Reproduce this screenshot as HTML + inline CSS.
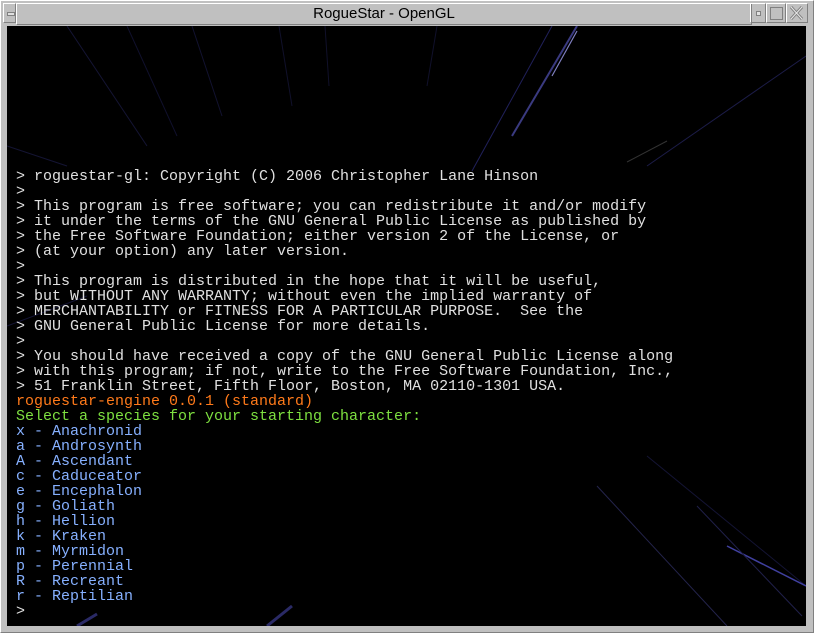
<!DOCTYPE html>
<html><head><style>
html,body{margin:0;padding:0;}
body{width:814px;height:633px;background:#c0c0c0;position:relative;overflow:hidden;font-family:"Liberation Sans",sans-serif;}
.frame{position:absolute;left:0;top:0;width:812px;height:631px;border-top:1px solid #fff;border-left:1px solid #fff;border-right:1px solid #808080;border-bottom:1px solid #808080;}
.title{position:absolute;left:16px;top:3px;width:734px;height:20px;border:1px solid;border-color:#fff #808080 #808080 #fff;text-align:center;font-size:15px;line-height:20px;color:#000;}
.btn{position:absolute;top:3px;height:20px;border:1px solid;border-color:#fff #808080 #808080 #fff;box-sizing:border-box;}
.screen{position:absolute;left:7px;top:26px;width:799px;height:600px;background:#000;overflow:hidden;}
pre{position:absolute;left:9px;top:143px;margin:0;font-family:"Liberation Mono",monospace;font-size:15px;line-height:15px;color:#e0e0e0;letter-spacing:0;}
.o{color:#ff7a1a}.g{color:#7ee040}.b{color:#86b0ff}
</style></head><body>
<div class="frame"></div>
<div class="btn" style="left:3px;width:13px;"><div style="position:absolute;left:3px;top:8px;width:6px;height:2px;border:1px solid #808080;background:#e0e0e0"></div></div>
<div class="title">RogueStar - OpenGL</div>
<div class="btn" style="left:750px;width:16px;"><div style="position:absolute;left:5px;top:7px;width:3px;height:3px;border:1px solid #808080;background:#e0e0e0"></div></div>
<div class="btn" style="left:766px;width:20px;"><div style="position:absolute;left:3px;top:3px;width:11px;height:11px;border:1px solid #808080;"></div></div>
<div class="btn" style="left:786px;width:22px;"><svg width="20" height="18" style="position:absolute;left:0;top:0"><path d="M4 3 L15 15 M15 3 L4 15" stroke="#808080" stroke-width="3"/><path d="M4 3 L15 15 M15 3 L4 15" stroke="#e8e8e8" stroke-width="1"/></svg></div>
<div class="screen">
<svg width="799" height="600" style="position:absolute;left:0;top:0">
<g stroke-width="1" fill="none">
<line x1="60" y1="0" x2="140" y2="120" stroke="#141434"/>
<line x1="120" y1="0" x2="170" y2="110" stroke="#10102c"/>
<line x1="185" y1="0" x2="215" y2="90" stroke="#121230"/>
<line x1="272" y1="0" x2="285" y2="80" stroke="#10102a"/>
<line x1="318" y1="0" x2="322" y2="60" stroke="#10102a"/>
<line x1="430" y1="0" x2="420" y2="60" stroke="#10102a"/>
<line x1="545" y1="0" x2="465" y2="145" stroke="#20205a"/>
<line x1="570" y1="0" x2="505" y2="110" stroke="#3a3a80" stroke-width="2"/>
<line x1="545" y1="50" x2="570" y2="5" stroke="#8080c0" stroke-width="1.2"/>
<line x1="799" y1="30" x2="640" y2="140" stroke="#1c1c48"/>
<line x1="620" y1="136" x2="660" y2="115" stroke="#333"/>
<line x1="0" y1="300" x2="80" y2="270" stroke="#141434"/>
<line x1="0" y1="120" x2="60" y2="140" stroke="#141434"/>
<line x1="590" y1="460" x2="720" y2="600" stroke="#24244c"/>
<line x1="640" y1="430" x2="799" y2="560" stroke="#141434"/>
<line x1="720" y1="520" x2="799" y2="560" stroke="#4040a0" stroke-width="1.5"/>
<line x1="690" y1="480" x2="795" y2="590" stroke="#20204a"/>
<line x1="70" y1="600" x2="90" y2="588" stroke="#2a2a66" stroke-width="3"/>
<line x1="260" y1="600" x2="285" y2="580" stroke="#2a2a66" stroke-width="3"/>
</g></svg>
<pre>&gt; roguestar-gl: Copyright (C) 2006 Christopher Lane Hinson
&gt;
&gt; This program is free software; you can redistribute it and/or modify
&gt; it under the terms of the GNU General Public License as published by
&gt; the Free Software Foundation; either version 2 of the License, or
&gt; (at your option) any later version.
&gt;
&gt; This program is distributed in the hope that it will be useful,
&gt; but WITHOUT ANY WARRANTY; without even the implied warranty of
&gt; MERCHANTABILITY or FITNESS FOR A PARTICULAR PURPOSE.  See the
&gt; GNU General Public License for more details.
&gt;
&gt; You should have received a copy of the GNU General Public License along
&gt; with this program; if not, write to the Free Software Foundation, Inc.,
&gt; 51 Franklin Street, Fifth Floor, Boston, MA 02110-1301 USA.
<span class="o">roguestar-engine 0.0.1 (standard)</span>
<span class="g">Select a species for your starting character:</span>
<span class="b">x - Anachronid
a - Androsynth
A - Ascendant
c - Caduceator
e - Encephalon
g - Goliath
h - Hellion
k - Kraken
m - Myrmidon
p - Perennial
R - Recreant
r - Reptilian</span>
&gt;</pre>
</div>
</body></html>
